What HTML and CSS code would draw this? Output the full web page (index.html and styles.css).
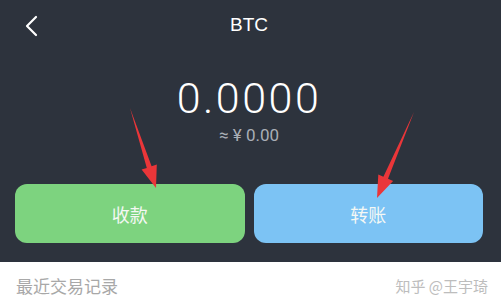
FILE: index.html
```html
<!DOCTYPE html>
<html lang="zh">
<head>
<meta charset="utf-8">
<link rel="stylesheet" href="styles.css">
</head>
<body>
<div class="page">
  <section class="wallet">
    <header class="nav">
      <svg class="back" width="14" height="22" viewBox="0 0 14 22"><polyline points="11,2 2,11 11,20" fill="none" stroke="#fff" stroke-width="2.2" stroke-linecap="round" stroke-linejoin="round"/></svg>
      <div class="title">BTC</div>
    </header>
    <div class="amount">0.0000</div>
    <div class="fiat">≈ ¥ 0.00</div>
    <div class="actions">
      <button class="btn receive">收款</button>
      <button class="btn transfer">转账</button>
    </div>
  </section>
  <section class="records">
    <span class="label">最近交易记录</span>
    <span class="mark">知乎 @王宇琦</span>
  </section>
  <svg class="arrows" width="501" height="304" viewBox="0 0 501 304">
    <polygon fill="#ea3639" points="130,108 151.6,166.3 156.8,164.6 156,188 141.6,169.6 146.8,167.9"/>
    <polygon fill="#ea3639" points="414,112 388,178.8 393.1,181 377,198 378.3,174.6 383.4,176.8"/>
  </svg>
</div>
</body>
</html>
```
FILE: styles.css
```css
* { box-sizing: border-box; }
html, body { margin: 0; padding: 0; background: #fff; }
.page {
  position: relative;
  width: 501px;
  height: 304px;
  overflow: hidden;
  font-family: "Noto Sans CJK SC", "Liberation Sans", sans-serif;
}
.wallet {
  background: #2d333d;
  height: 262px;
  padding: 0 18px 19px 15px;
  display: flex;
  flex-direction: column;
  align-items: center;
}
.nav {
  position: relative;
  width: 100%;
  height: 50px;
  display: flex;
  align-items: center;
  justify-content: center;
}
.back {
  position: absolute;
  left: 10px;
  top: 15px;
}
.title {
  color: #fff;
  font-family: "Liberation Sans", Arial, sans-serif;
  font-size: 19px;
  font-weight: 500;
  line-height: 24px;
}
.amount {
  margin-top: 24px;
  color: #fff;
  font-family: Roboto, "Liberation Sans", sans-serif;
  font-weight: 300;
  font-size: 43px;
  line-height: 48px;
  letter-spacing: 2.5px;
}
.fiat {
  margin-top: 2px;
  color: #a9aeb6;
  font-family: Roboto, "Liberation Sans", sans-serif;
  font-size: 17px;
  line-height: 22px;
}
.actions {
  margin-top: 38px;
  width: 100%;
  display: flex;
  gap: 9px;
}
.btn {
  flex: 1;
  height: 59px;
  border: none;
  border-radius: 12px;
  color: #f4f8f4;
  font-family: "Noto Sans CJK SC", sans-serif;
  font-size: 18px;
  padding: 0;
}
.receive { background: #7dd37f; }
.transfer { background: #7cc3f4; }
.records {
  height: 42px;
  display: flex;
  justify-content: space-between;
  align-items: center;
  padding: 4px 13px 0 16px;
}
.label {
  color: #a8a8a8;
  font-size: 17px;
}
.mark {
  color: #bdbdbd;
  font-size: 15px;
}
.arrows {
  position: absolute;
  left: 0;
  top: 0;
  pointer-events: none;
}
```
